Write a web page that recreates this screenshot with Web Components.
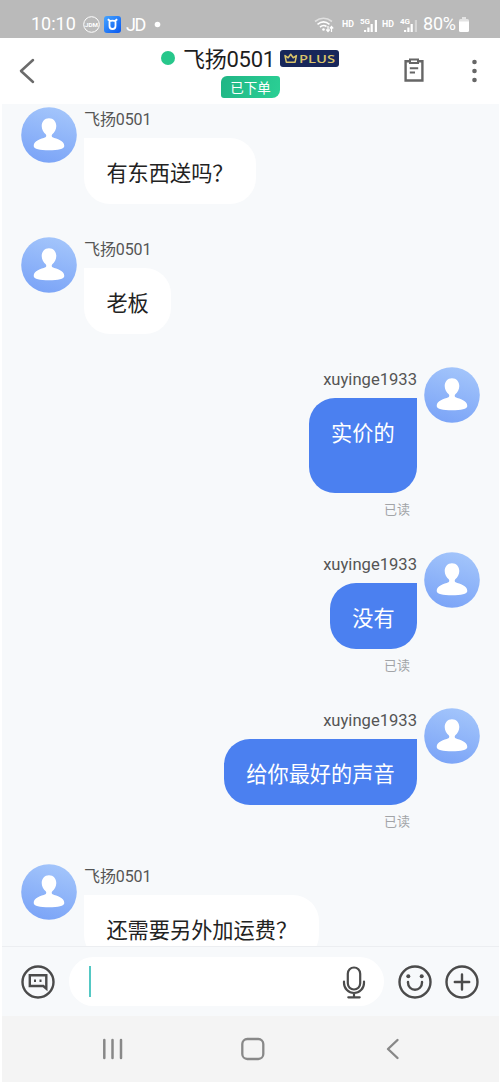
<!DOCTYPE html>
<html lang="zh-CN">
<head>
<meta charset="utf-8">
<title>飞扬0501</title>
<style>
html,body{margin:0;height:100%;overflow:hidden;background:#fff}
body{font-family:Roboto,"Noto Sans CJK SC",sans-serif}
</style>
</head>
<body>
<chat-app></chat-app>
<script>
const define = (name, html, setup) => customElements.define(name, class extends HTMLElement {
  constructor() {
    super();
    this.attachShadow({ mode: 'open' }).innerHTML = html;
  }
  connectedCallback() { if (setup) setup(this, this.shadowRoot); }
});

define('status-bar', `
<style>
:host{display:flex;align-items:flex-start;height:38px;box-sizing:border-box;padding:14px 30px 0 31px;background:#bababa;color:#fff;line-height:20px;white-space:nowrap}
span,svg{flex:none;display:block}
.t{font-size:18px;width:46px}
.jd{font-size:18px;letter-spacing:-1.4px;margin-left:5px;width:23px;padding-top:1px}
.s{font-size:8.8px;font-weight:700}
</style>
<span class="t">10:10</span>
<svg style="margin:2px 0 0 6px" width="17" height="17" viewBox="0 0 17 17"><circle cx="8.5" cy="8.5" r="7.8" fill="none" stroke="#fff" stroke-width="1"/><text x="8.5" y="10.8" font-family="Roboto" font-weight="700" font-size="6.2" text-anchor="middle" fill="#fff">JDM</text></svg>
<svg style="margin:2px 0 0 4px" width="17" height="17" viewBox="0 0 17 17"><defs><linearGradient id="g" x2="1" y2="1"><stop stop-color="#45a4ff"/><stop offset="1" stop-color="#0857f0"/></linearGradient></defs><rect width="17" height="17" rx="3" fill="url(#g)"/><path d="M3.8 3.2L5.8 4.8M13.2 3.2L11.2 4.8M5.5 5.2V10a3 3 0 0 0 6 0V5.2M5.3 5.3Q8.5 3.8 11.7 5.3" fill="none" stroke="#fff" stroke-width="1.8"/></svg>
<span class="jd">JD</span>
<svg style="margin:7px 0 0 5px" width="7" height="7"><circle cx="3.5" cy="3.5" r="2.8" fill="#fff"/></svg>
<svg style="margin:1px 0 0 152px" width="24" height="20" viewBox="0 0 24 20" fill="none" stroke="#fff" stroke-width="1.6"><path d="M2 6.5Q10.500 0 19 6.500" opacity=".55"/><path d="M4.500 9.300Q10.500 4.500 16.500 9.300M7 12Q10.500 9.300 13.500 11.500"/><circle cx="10.5" cy="14.5" r="1.3" fill="#fff" stroke="none"/><path d="M15 11v5M13.300 14.500L15 16.500l1.700-2M18.500 17v-5M16.800 13.500l1.700-2 1.700 2" stroke-width="1.200"/></svg>
<span class="s" style="margin-left:5px;width:13px">HD</span>
<svg style="margin:2px 0 0 5px" width="20" height="16" viewBox="0 0 20 16"><text x="0" y="7.500" font-family="Roboto" font-weight="700" font-size="8" fill="#fff">5G</text><path d="M4 14h2.200v2H4zM7.300 11.500h2.200V16H7.300zM10.600 8h2.200v8h-2.200zM14.800 4H17v12h-2.200z" fill="#fff"/></svg>
<span class="s" style="margin-left:2px;width:13px">HD</span>
<svg style="margin:2px 0 0 5px" width="20" height="16" viewBox="0 0 20 16"><text x="0" y="7.500" font-family="Roboto" font-weight="700" font-size="8" fill="#fff">4G</text><path d="M4 14h2.200v2H4zM7.300 11.500h2.200V16H7.300zM10.600 8h2.200v8h-2.200z" fill="#fff"/><path d="M14.800 4H17v12h-2.200z" fill="#fff" opacity=".4"/></svg>
<span class="t" style="margin-left:3px;width:34px;letter-spacing:-.2px">80%</span>
<svg style="margin:3px 0 0 2px" width="10" height="15" viewBox="0 0 10 15"><path d="M3 0h4v2h1.500Q10 2 10 3.500V5H0V3.500Q0 2 1.500 2H3z" fill="#fff" opacity=".6"/><path d="M0 4.500h10v9q0 1.500-1.500 1.500h-7Q0 15 0 13.500z" fill="#fff"/></svg>
`);

define('plus-badge', `
<style>:host{display:block;width:59px;height:17px}svg{display:block}</style>
<svg width="59" height="17" viewBox="0 0 59 17"><rect width="59" height="17" rx="3" fill="#17265a"/><path d="M5 5.600l3.200 2.200L10.700 4.200l2.500 3.600 3.200-2.200-1.300 6.600H6.300z" fill="none" stroke="#d9c36a" stroke-width="1.500" stroke-linejoin="round"/><text x="19" y="12.600" font-family="Open Sans" font-weight="600" font-size="11.500" textLength="36" lengthAdjust="spacingAndGlyphs" fill="#d9c36a">PLUS</text></svg>`);

define('chat-header', `
<style>
:host{display:grid;grid-template-columns:161px 1fr 100px;height:66px;background:#fff;color:#1d1d1d}
svg{display:block}
.back{padding:20px 0 0 18px}
.title{display:flex;align-items:center;height:28px;margin-top:7px;font-size:22px;line-height:28px;white-space:nowrap}
.dot{width:14px;height:14px;border-radius:50%;background:#27c78b;margin-right:8px;margin-top:-2px}
.who{width:91px;letter-spacing:-.25px;padding-top:2px}
plus-badge{margin:-1px 0 0 5.500px}
.tag{width:59px;height:22px;margin:3px 0 0 60px;border-radius:6px 3px 8px 3px;background:linear-gradient(110deg,#20b585,#2bd095);color:#fff;font-size:13.500px;line-height:24px;text-align:center}
.act{display:flex;padding:20px 0 0 3px}
</style>
<div class="back"><svg width="18" height="26" viewBox="0 0 18 26"><path d="M15 2L3 13l12 11" fill="none" stroke="#6b6b6b" stroke-width="2.500" stroke-linecap="round" stroke-linejoin="round"/></svg></div>
<div><div class="title"><span class="dot"></span><span class="who"><slot></slot></span><plus-badge></plus-badge></div><div class="tag">已下单</div></div>
<div class="act"><svg width="22" height="26" viewBox="0 0 22 26" fill="none" stroke="#666" stroke-width="2.400"><path d="M2.600 3.200h16.800v19.300H2.600z"/><path d="M7 1.500h8V5H7z" fill="#fff" stroke-width="2"/><path d="M6.800 10.300h8.400M6.800 14.500h5.200" stroke-width="2"/></svg>
<svg style="margin-left:44px" width="14" height="26" fill="#666"><circle cx="5.500" cy="4" r="2.300"/><circle cx="5.500" cy="13" r="2.300"/><circle cx="5.500" cy="22" r="2.300"/></svg></div>`);

define('user-avatar', `
<style>:host{display:block;width:56px;height:56px;flex:none}svg{display:block}</style>
<svg width="56" height="56" viewBox="0 0 56 56"><defs><linearGradient id="a" x1=".65" y1="0" x2=".35" y2="1"><stop stop-color="#a3c5fb"/><stop offset="1" stop-color="#7ba4f7"/></linearGradient></defs><circle cx="28" cy="28" r="27.800" fill="url(#a)"/><path d="M28 11.300c4.500 0 7.300 3.400 7.300 7.700 0 3.700-1.800 6.500-4 8.300-.8.700-.8 2.500.3 3 4.200 1.700 11.700 3.200 11.700 8.600 0 3.200-6.300 4.300-15.300 4.300s-15.300-1.100-15.300-4.300c0-5.400 7.500-6.900 11.700-8.600 1.100-.5 1.100-2.300.3-3-2.200-1.800-4-4.600-4-8.300 0-4.300 2.800-7.700 7.300-7.700z" fill="#fff"/></svg>`);

define('chat-message', `
<style>
:host{display:flex;align-items:flex-start;gap:7px;padding:0 20px 33px 21px}
:host([sent]){flex-direction:row-reverse;padding-bottom:0}
.col{display:flex;flex-direction:column;align-items:flex-start}
:host([sent]) .col{align-items:flex-end}
.name{height:31px;line-height:25px;font-size:16px;color:#555;letter-spacing:-.1px}
:host([sent]) .name{font-size:16.600px;letter-spacing:0}
.bubble{box-sizing:border-box;min-height:66px;padding:19.500px 22.400px 15.500px;border-radius:0 26px 26px 26px;background:#fff;color:#222;font-size:21.200px;line-height:31px;white-space:nowrap}
:host([sent]) .bubble{border-radius:26px 0 26px 26px;background:#4b80f0;color:#fff}
:host([tall]) .bubble{height:95px}
.read{display:none;height:59px;padding-right:7px;font-size:13px;line-height:34px;color:#a2a4a7}
:host([sent]) .read{display:block;box-sizing:border-box}
</style>
<user-avatar></user-avatar>
<div class="col"><div class="name"></div><div class="bubble"><slot></slot></div><div class="read"></div></div>`,
(el, root) => {
  root.querySelector('.name').textContent = el.getAttribute('name');
  if (el.hasAttribute('sent')) root.querySelector('.read').textContent = '已读';
});

define('chat-composer', `
<style>
:host{display:flex;align-items:center;height:70px;box-sizing:border-box;border-top:1px solid #eceef1;padding:0 20px 0 21px;background:#f7f9fb}
svg{display:block;flex:none}
.field{display:flex;align-items:center;justify-content:space-between;width:315px;height:49px;box-sizing:border-box;margin:0 14px 0 14px;padding:0 17px 0 20px;border-radius:25px;background:#fff}
.caret{width:2px;height:31px;background:#54c8c4}
</style>
<svg width="34" height="34" viewBox="0 0 34 34" fill="none" stroke="#4b4b4b" stroke-width="2.400"><circle cx="17" cy="17" r="15.500"/><path d="M8.800 10.300h16.500v13.300l-3-2.600H8.800z"/><path d="M13 15.700h2M18.500 15.700h2" stroke-width="2.500"/></svg>
<div class="field"><span class="caret"></span><svg width="26" height="34" viewBox="0 0 26 34" fill="none" stroke="#4b4b4b" stroke-width="2.200" stroke-linecap="round"><rect x="6.800" y="2.500" width="12.400" height="22" rx="6.200"/><path d="M3 16.500v1.500a10 10 0 0 0 20 0v-1.500M13 28v4.300M7.300 32.300h11.400"/></svg></div>
<svg width="34" height="34" viewBox="0 0 34 34" fill="none" stroke="#4b4b4b" stroke-width="2.400"><circle cx="17" cy="17" r="15.500"/><circle cx="10.300" cy="11.300" r="2" fill="#4b4b4b" stroke="none"/><circle cx="23.700" cy="11.300" r="2" fill="#4b4b4b" stroke="none"/><path d="M10 17v.8a7 7 0 0 0 14 0V17" stroke-linecap="round"/></svg>
<svg style="margin-left:13px" width="34" height="34" viewBox="0 0 34 34" fill="none" stroke="#4b4b4b" stroke-width="2.400" stroke-linecap="round"><circle cx="17" cy="17" r="15.500"/><path d="M9.800 17h14.400M17 9.500v15"/></svg>`);

define('nav-bar', `
<style>:host{display:flex;align-items:center;justify-content:space-between;height:66px;box-sizing:border-box;padding:0 98px 0 100px;background:#f4f4f4}svg{display:block}</style>
<svg width="24" height="24" viewBox="0 0 24 24" stroke="#888" stroke-width="2.500" stroke-linecap="round"><path d="M4.300 3v18M12.500 3v18M21 3v18"/></svg>
<svg width="26" height="24" viewBox="0 0 26 24" fill="none" stroke="#888" stroke-width="2.300"><rect x="1.300" y="2" width="21" height="20" rx="5"/></svg>
<svg width="18" height="24" viewBox="0 0 18 24" fill="none" stroke="#888" stroke-width="2.400" stroke-linecap="round" stroke-linejoin="round"><path d="M13.500 3L4 12l9.500 9"/></svg>`);

define('chat-app', `
<style>
:host{display:flex;flex-direction:column;height:1083px;width:500px;box-sizing:border-box;padding-bottom:1px;overflow:hidden;background:#fff}
.log{flex:1;min-height:0;overflow:hidden;padding-top:3px;background:#f7f9fb;margin:0 1px 0 2px}
chat-composer{margin:0 1px 0 2px;padding-left:19px;padding-right:18px}
nav-bar{margin:0 1px 0 2px;padding-left:98px;padding-right:97px}
chat-message{margin:0 -1px 0 -2px}
</style>
<status-bar></status-bar>
<chat-header>飞扬0501</chat-header>
<div class="log">
<chat-message name="飞扬0501">有东西送吗？</chat-message>
<chat-message name="飞扬0501">老板</chat-message>
<chat-message name="xuyinge1933" sent tall>实价的</chat-message>
<chat-message name="xuyinge1933" sent>没有</chat-message>
<chat-message name="xuyinge1933" sent>给你最好的声音</chat-message>
<chat-message name="飞扬0501">还需要另外加运费？</chat-message>
</div>
<chat-composer></chat-composer>
<nav-bar></nav-bar>`);
</script>
</body>
</html>
